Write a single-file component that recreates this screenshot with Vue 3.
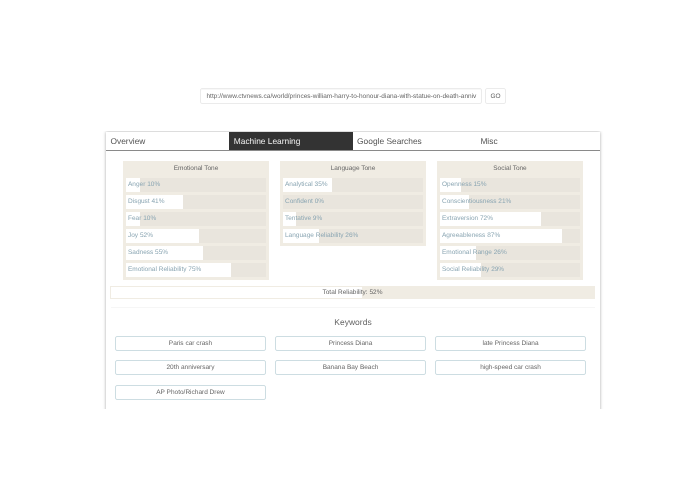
<script setup>
const tabs = ['Overview', 'Machine Learning', 'Google Searches', 'Misc']
const panels = [
  { title: 'Emotional Tone', rows: [['Anger', 10], ['Disgust', 41], ['Fear', 10], ['Joy', 52], ['Sadness', 55], ['Emotional Reliability', 75]] },
  { title: 'Language Tone', rows: [['Analytical', 35], ['Confident', 0], ['Tentative', 9], ['Language Reliability', 26]] },
  { title: 'Social Tone', rows: [['Openness', 15], ['Conscientiousness', 21], ['Extraversion', 72], ['Agreeableness', 87], ['Emotional Range', 26], ['Social Reliability', 29]] }
]
const keywords = ['Paris car crash', 'Princess Diana', 'late Princess Diana', '20th anniversary', 'Banana Bay Beach', 'high-speed car crash', 'AP Photo/Richard Drew']
</script>

<template>
  <div class="page">
    <div class="search">
      <div class="url">http://www.ctvnews.ca/world/princes-william-harry-to-honour-diana-with-statue-on-death-anniv</div>
      <div class="go">GO</div>
    </div>
    <div class="clip">
      <div class="card">
        <div class="tabs">
          <div v-for="(t, i) in tabs" :key="t" class="tab" :class="{ active: i === 1 }">{{ t }}</div>
        </div>
        <div class="panels">
          <div v-for="p in panels" :key="p.title" class="panel">
            <div class="panel-title">{{ p.title }}</div>
            <div v-for="r in p.rows" :key="r[0]" class="row">
              <div class="fill" :style="{ width: r[1] + '%' }"></div>
              <span class="label">{{ r[0] }} {{ r[1] }}%</span>
            </div>
          </div>
        </div>
        <div class="total">
          <div class="total-fill"></div>
          <span class="total-text">Total Reliability: 52%</span>
        </div>
        <div class="divider"></div>
        <div class="kw-title">Keywords</div>
        <div class="chips">
          <div v-for="k in keywords" :key="k" class="chip">{{ k }}</div>
        </div>
      </div>
    </div>
  </div>
</template>

<style>
html, body { margin: 0; background: #fff; }
</style>

<style scoped>
.page {
  width: 695px;
  height: 494px;
  padding-top: 88px;
  box-sizing: border-box;
  font-family: "Liberation Sans", Arial, sans-serif;
  color: #666;
  overflow: hidden;
  text-rendering: geometricPrecision;
  filter: blur(0.3px);
}
.search {
  display: flex;
  gap: 3px;
  padding-left: 200px;
  height: 16px;
}
.url {
  width: 282px;
  box-sizing: border-box;
  border: 1px solid #ebebeb;
  border-radius: 2px;
  padding-left: 5.5px;
  font-size: 6.5px;
  line-height: 15px;
  color: #666;
  white-space: nowrap;
  overflow: hidden;
  box-shadow: inset 0 1px 1px rgba(0, 0, 0, 0.03);
}
.go {
  width: 21px;
  box-sizing: border-box;
  border: 1px solid #ebebeb;
  border-radius: 2px;
  font-size: 6.5px;
  line-height: 15px;
  text-align: center;
  color: #666;
}
.clip {
  margin-top: 27px;
  padding: 1px 95px 0 106px;
  height: 278px;
  box-sizing: border-box;
  overflow: hidden;
}
.card {
  width: 494px;
  box-sizing: border-box;
  height: 320px;
  background: #fff;
  box-shadow: 0 0 3px rgba(0, 0, 0, 0.35);
}
.tabs {
  display: grid;
  grid-template-columns: repeat(4, 123.3px);
  height: 18px;
  border-bottom: 1px solid #8a8a8a;
}
.tab {
  padding-left: 4.5px;
  font-size: 8.4px;
  line-height: 18px;
  color: #555;
}
.tab.active {
  background: #333;
  color: #eee;
}
.panels {
  display: grid;
  grid-template-columns: repeat(3, 146px);
  column-gap: 11px;
  align-items: start;
  padding: 10px 0 0 17px;
}
.panel {
  background: #f0ece3;
  padding: 0 3px 3px;
}
.panel-title {
  font-size: 6.5px;
  line-height: 15px;
  padding-bottom: 2px;
  text-align: center;
  color: #666;
}
.row {
  position: relative;
  height: 14px;
  margin-bottom: 3px;
  background: #e9e5dd;
  overflow: hidden;
}
.row:last-child { margin-bottom: 0; }
.fill {
  height: 100%;
  background: #fff;
}
.label {
  position: absolute;
  left: 2px;
  top: 0;
  font-size: 6.5px;
  line-height: 13px;
  color: #8ba6b3;
  white-space: nowrap;
}
.total {
  position: relative;
  margin: 6px 5px 0 4px;
  height: 13px;
  box-sizing: border-box;
  border: 1px solid #f0ece3;
  background: #f0ece3;
}
.total-fill {
  height: 100%;
  width: 52%;
  background: #fff;
}
.total-text {
  position: absolute;
  left: 0;
  right: 0;
  top: 0;
  text-align: center;
  font-size: 6.5px;
  line-height: 11px;
  color: #666;
}
.divider {
  margin: 8px 5px 0;
  border-top: 1px solid #f6f6f6;
}
.kw-title {
  margin-top: 8px;
  text-align: center;
  font-size: 8.5px;
  line-height: 12px;
  color: #666;
}
.chips {
  display: grid;
  grid-template-columns: repeat(3, 151px);
  grid-auto-rows: 15px;
  column-gap: 9px;
  row-gap: 9.3px;
  padding: 8px 0 0 9px;
}
.chip {
  box-sizing: border-box;
  border: 1px solid #cddde2;
  border-radius: 2px;
  font-size: 6.5px;
  line-height: 13.5px;
  text-align: center;
  color: #666;
}
</style>
